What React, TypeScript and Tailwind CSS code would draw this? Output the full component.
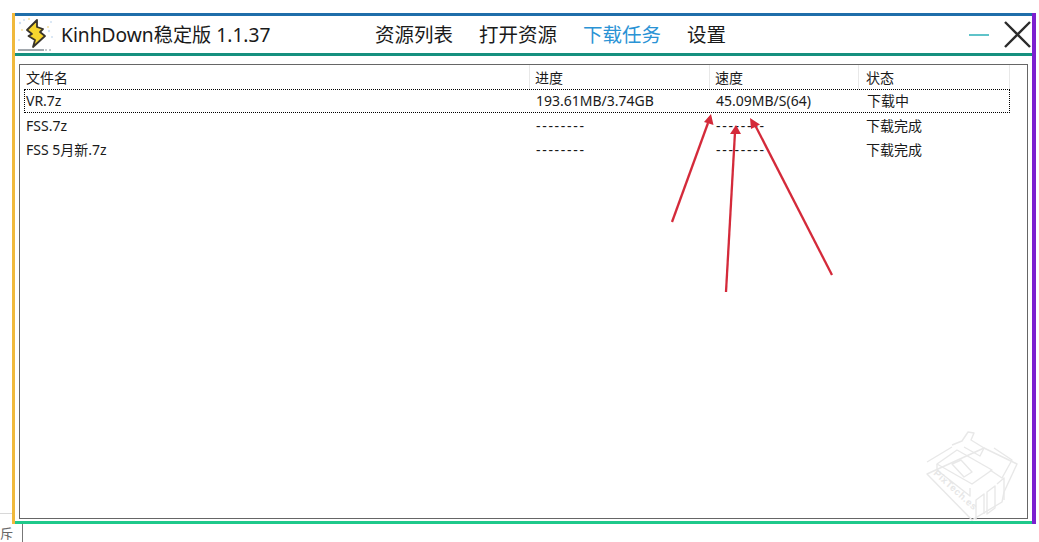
interface TaskRow {
  name: string;
  progress: string;
  speed: string;
  status: string;
}

const rows: TaskRow[] = [
  { name: "VR.7z", progress: "193.61MB/3.74GB", speed: "45.09MB/S(64)", status: "下载中" },
  { name: "FSS.7z", progress: "--------", speed: "--------", status: "下载完成" },
  { name: "FSS 5月新.7z", progress: "--------", speed: "--------", status: "下载完成" },
];

const navItems = ["资源列表", "打开资源", "下载任务", "设置"];

const Logo = () => (
  <svg width="46" height="37" viewBox="0 0 46 37" className="shrink-0">
    <g fill="#cfe0f2">
      <circle cx="5" cy="7" r="1.2" />
      <circle cx="9" cy="4" r="1" />
      <circle cx="36" cy="6" r="1" />
      <circle cx="34" cy="15" r="1.2" />
      <circle cx="37" cy="21" r="1" />
      <circle cx="4" cy="24" r="1" />
    </g>
    <g fill="#f3dfa0">
      <circle cx="14" cy="3" r="1" />
      <circle cx="33" cy="11" r="1" />
      <circle cx="7" cy="14" r="1" />
    </g>
    <path d="M22 4 L12 14 L17 18 L13.5 20 L20 24 L18 31 L30 20 L25 16 L28 13 L22 11 Z" fill="#f7d52e" stroke="#3a352b" strokeWidth="1.8" strokeLinejoin="round" />
    <path d="M3 34 H29" stroke="#44505c" strokeWidth="1" />
    <path d="M30 34 H38" stroke="#8b939b" strokeWidth="1" strokeDasharray="2 2" />
  </svg>
);

const Arrows = () => (
  <svg width="1039" height="542" viewBox="0 0 1039 542" className="absolute left-0 top-0 pointer-events-none">
    <g stroke="#d42a3a" strokeWidth="2.3" strokeLinecap="butt">
      <path d="M672 222 L708 123" />
      <path d="M726 292 L735 132" />
      <path d="M832 275 L755 125" />
    </g>
    <g fill="#d42a3a">
      <path d="M711 114 L713.5 125 L704 122 Z" />
      <path d="M736 125 L741 134 L730 134 Z" />
      <path d="M750 118 L760 124.5 L751 129 Z" />
    </g>
  </svg>
);

const Watermark = () => (
  <svg width="100" height="100" viewBox="0 0 100 100" className="absolute left-[924px] top-[428px] pointer-events-none">
    <g fill="none" stroke="#e8e8e8" strokeWidth="1.4" strokeLinejoin="round">
      <path d="M3 34 L28 19 M60 20 L93 36 L80 64 L78 74 L48 92 L3 46 Z" />
      <path d="M13 36 L33 22 L68 42 L48 56 Z" />
      <path d="M28 36 L37 32 L48 44 L40 49 Z" />
      <path d="M13 36 L13 42 L46 68 L46 60" />
      <path d="M28 17 L38 13 L44 4 L50 5 L47 12 L60 20 L56 28 L40 19" />
      <path d="M70 20 L88 32 L78 50 L66 42" />
      <path d="M52 92 L52 72 L60 66 L60 86" />
      <path d="M63 64 L71 58 L71 80 L63 86 Z" />
      <path d="M73 56 L80 50 L80 72" />
    </g>
    <text x="0" y="0" transform="translate(9 46) rotate(42)" fill="#e6e6e6" fontSize="9.5" fontWeight="700" letterSpacing="0.6" fontFamily="'Liberation Sans', sans-serif">PixTech.es</text>
  </svg>
);

export default function App() {
  return (
    <div className="relative w-[1039px] h-[542px] overflow-hidden bg-white pl-[12px] pt-[13px] font-['Noto_Sans','Noto_Sans_CJK_SC',sans-serif] text-[#1a1a1a]">
      <div className="flex w-[1024px] h-[511px]">
        <div className="w-[3px] bg-[#f0b93c]" />
        <div className="flex flex-1 min-w-0 flex-col">
          <div className="h-[3px] bg-[#1f6eaa]" />
          <div className="flex h-[37px] items-center">
            <Logo />
            <div className="w-[314px] text-[19.2px] leading-none whitespace-nowrap">KinhDown稳定版 1.1.37</div>
            <div className="flex gap-[26px] text-[19.5px] leading-none">
              {navItems.map((item) => (
                <span key={item} className={item === "下载任务" ? "text-[#2a93d5]" : ""}>{item}</span>
              ))}
            </div>
            <div className="ml-auto mr-[1px] flex items-center gap-[15px]">
              <div className="h-[2px] w-[20px] bg-[#5fc3c9]" />
              <svg width="27" height="27" viewBox="0 0 27 27">
                <path d="M1 1 L26 26 M26 1 L1 26" stroke="#2b2b2b" strokeWidth="2.4" />
              </svg>
            </div>
          </div>
          <div className="h-[3px] bg-[#15907f]" />
          <div className="flex-1 min-h-0 px-[4px] pt-[8px] pb-[2px]">
            <div className="h-full border border-[#666666] text-[14px] leading-none">
              <div className="ml-[4px] grid h-[24px] grid-cols-[506px_180px_149px_151px] items-stretch">
                <div className="flex items-center border-r border-[#e8e8e8] pl-[2px] pt-[2px]">文件名</div>
                <div className="flex items-center border-r border-[#e8e8e8] pl-[5px] pt-[2px]">进度</div>
                <div className="flex items-center border-r border-[#e8e8e8] pl-[5px] pt-[2px]">速度</div>
                <div className="flex items-center border-r border-[#e8e8e8] pl-[7px] pt-[2px]">状态</div>
              </div>
              {rows.map((row, index) => (
                <div
                  key={row.name}
                  className={`ml-[4px] grid h-[24px] w-[986px] grid-cols-[506px_180px_149px_151px] items-center ${index === 0 ? "border border-dotted border-black" : "pt-[2px]"}`}
                >
                  <div className={index === 0 ? "pl-[1px]" : "pl-[2px]"}>{row.name}</div>
                  <div className={index === 0 ? "pl-[5px]" : "pl-[6px] tracking-[1.7px]"}>{row.progress}</div>
                  <div className={index === 0 ? "pl-[5px]" : "pl-[6px] tracking-[1.7px]"}>{row.speed}</div>
                  <div className="pl-[7px]">{row.status}</div>
                </div>
              ))}
            </div>
          </div>
          <div className="h-[3px] bg-[#1fc98b]" />
        </div>
        <div className="w-[4px] bg-[#7c1fd0]" />
      </div>
      <Arrows />
      <Watermark />
      <div className="absolute left-0 top-[513px] h-px w-[12px] bg-[#d8d8d8]" />
      <div className="absolute left-[22px] top-[524px] h-[18px] w-px bg-[#777777]" />
      <div className="absolute left-0 top-[525px] text-[13px] leading-[16px] text-[#666666]">斥</div>
    </div>
  );
}
